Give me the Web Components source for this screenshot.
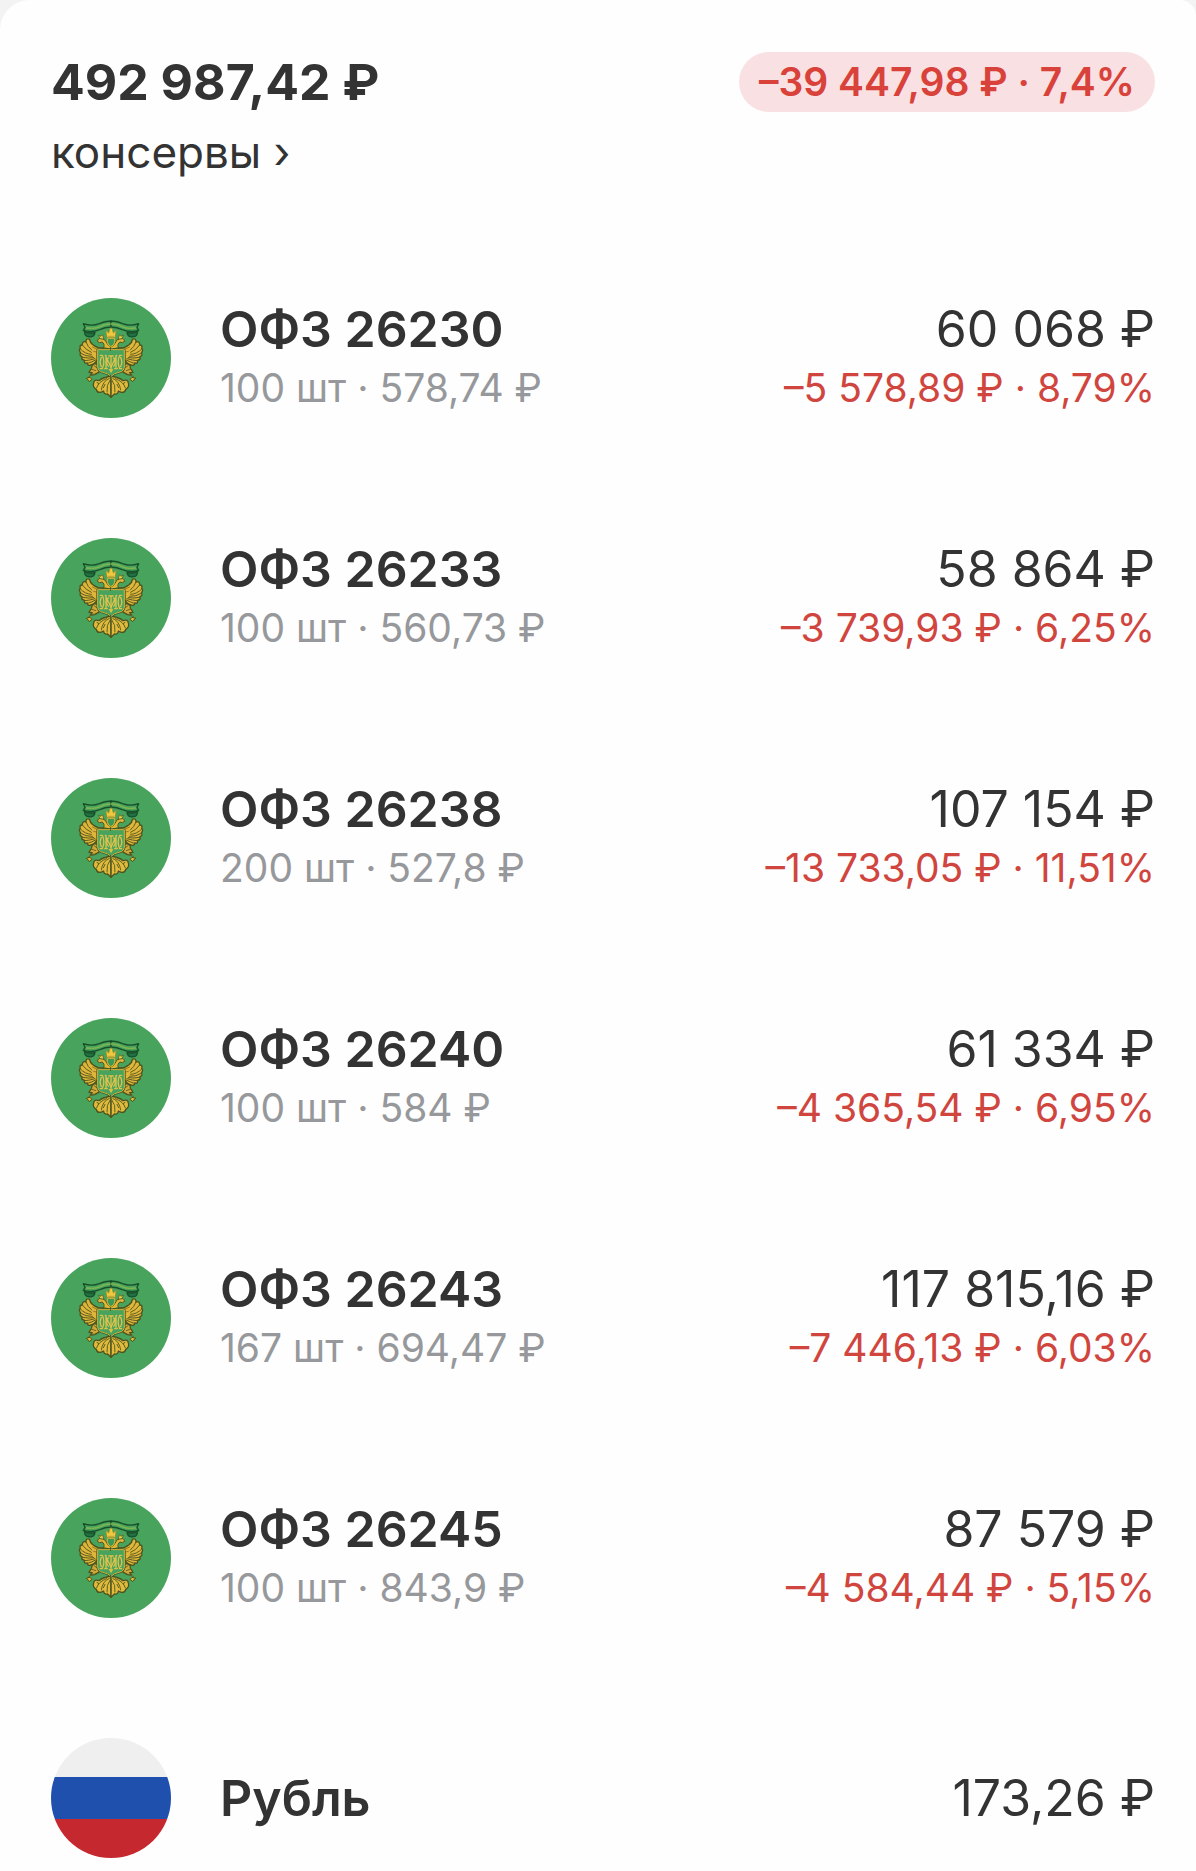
<!DOCTYPE html>
<html lang="ru">
<head>
<meta charset="utf-8">
<meta name="viewport" content="width=device-width, initial-scale=1">
<title>консервы</title>
<style>
	body {
		margin: 0;
		background: #f3f3f4;
		color: #333;
		font-family: Inter, "Liberation Sans", sans-serif;
	}
</style>
</head>
<body>

<portfolio-card>
	<portfolio-header slot="header" name="консервы">
		492 987,42 ₽
		<change-badge slot="change">–39 447,98 ₽ · 7,4%</change-badge>
	</portfolio-header>
	<asset-row name="ОФЗ 26230" details="100 шт · 578,74 ₽" value="60 068 ₽" change="–5 578,89 ₽ · 8,79%"><icon-ofz></icon-ofz></asset-row>
	<asset-row name="ОФЗ 26233" details="100 шт · 560,73 ₽" value="58 864 ₽" change="–3 739,93 ₽ · 6,25%"><icon-ofz></icon-ofz></asset-row>
	<asset-row name="ОФЗ 26238" details="200 шт · 527,8 ₽" value="107 154 ₽" change="–13 733,05 ₽ · 11,51%"><icon-ofz></icon-ofz></asset-row>
	<asset-row name="ОФЗ 26240" details="100 шт · 584 ₽" value="61 334 ₽" change="–4 365,54 ₽ · 6,95%"><icon-ofz></icon-ofz></asset-row>
	<asset-row name="ОФЗ 26243" details="167 шт · 694,47 ₽" value="117 815,16 ₽" change="–7 446,13 ₽ · 6,03%"><icon-ofz></icon-ofz></asset-row>
	<asset-row name="ОФЗ 26245" details="100 шт · 843,9 ₽" value="87 579 ₽" change="–4 584,44 ₽ · 5,15%"><icon-ofz></icon-ofz></asset-row>
	<asset-row name="Рубль" value="173,26 ₽"><icon-rub></icon-rub></asset-row>
</portfolio-card>

<script>
class PortfolioCard extends HTMLElement {

	constructor() {
		super();
		this.attachShadow({ mode: "open" });
	}

	connectedCallback() {
		this.shadowRoot.innerHTML = `
			<style>
				:host {
					display: block;
					box-sizing: border-box;
					padding: 52px 41px 13px 51px;
					background: #fefefe;
					border-radius: 30px 16px 0 0;
				}
				.list {
					display: flex;
					flex-direction: column;
					gap: 120px;
					margin-top: 116px;
				}
			</style>
			<slot name="header"></slot>
			<div class="list" role="list"><slot></slot></div>
		`;
	}
}

class PortfolioHeader extends HTMLElement {

	constructor() {
		super();
		this.attachShadow({ mode: "open" });
	}

	connectedCallback() {
		this.shadowRoot.innerHTML = `
			<style>
				:host {
					display: flex;
					justify-content: space-between;
					align-items: flex-start;
				}
				.info {
					display: flex;
					flex-direction: column;
					align-items: flex-start;
					gap: 10px;
				}
				h1 {
					margin: 0;
					font-size: 50px;
					line-height: 60px;
					font-weight: 700;
				}
				button {
					padding: 0;
					border: 0;
					background: none;
					color: inherit;
					font: inherit;
					font-size: 44px;
					line-height: 60px;
					cursor: pointer;
				}
			</style>
			<div class="info">
				<h1><slot></slot></h1>
				<button type="button">${this.getAttribute("name")} ›</button>
			</div>
			<slot name="change"></slot>
		`;
	}
}

class ChangeBadge extends HTMLElement {

	constructor() {
		super();
		this.attachShadow({ mode: "open" });
	}

	connectedCallback() {
		this.shadowRoot.innerHTML = `
			<style>
				:host {
					display: block;
					padding: 0 20px;
					border-radius: 30px;
					background: #f9e1e3;
					color: #d9423a;
					font-size: 39px;
					line-height: 60px;
					font-weight: 600;
					white-space: nowrap;
				}
			</style>
			<slot></slot>
		`;
	}
}

class AssetRow extends HTMLElement {

	constructor() {
		super();
		this.attachShadow({ mode: "open" });
	}

	connectedCallback() {
		const details = this.getAttribute("details");
		const change = this.getAttribute("change");

		this.setAttribute("role", "listitem");
		this.shadowRoot.innerHTML = `
			<style>
				:host {
					display: flex;
					align-items: center;
					gap: 49px;
					min-height: 120px;
				}
				.column {
					display: flex;
					flex-direction: column;
					white-space: nowrap;
				}
				.value {
					margin-left: auto;
					text-align: right;
				}
				.main {
					font-size: 50px;
					line-height: 60px;
				}
				.name .main {
					font-weight: 600;
				}
				.sub {
					font-size: 39px;
					line-height: 58px;
					color: #96989b;
				}
				.value .sub {
					color: #d0453e;
				}
			</style>
			<slot></slot>
			<div class="column name">
				<span class="main">${this.getAttribute("name")}</span>
				${details ? `<span class="sub">${details}</span>` : ""}
			</div>
			<div class="column value">
				<span class="main">${this.getAttribute("value")}</span>
				${change ? `<span class="sub">${change}</span>` : ""}
			</div>
		`;
	}
}

class IconOfz extends HTMLElement {

	constructor() {
		super();
		this.attachShadow({ mode: "open" });
	}

	connectedCallback() {
		this.shadowRoot.innerHTML = `
			<style>
				:host {
					display: block;
					flex: none;
					width: 120px;
					height: 120px;
				}
				svg {
					display: block;
					width: 100%;
					height: 100%;
				}
			</style>
			<svg viewBox="0 0 360 360" aria-hidden="true">
				<circle cx="180" cy="180" r="180" fill="#48a45c"/>
				<g id="half" stroke-linejoin="round" stroke-linecap="round">
					<!-- ribbon -->
					<path d="M180 69 Q160 69 145 77 Q122 86 97 77 L102 88 L97 98 Q126 104 146 95 Q162 87 180 87Z" fill="#48a45c" stroke="#17502b" stroke-width="4"/>
					<path d="M108 90 Q130 93 147 86 Q162 78 180 78" fill="none" stroke="#86b54e" stroke-width="5" stroke-dasharray="3 5"/>
					<path d="M101 100 q-1 15 11 16 q18 3 20 -12 l-13 1 q-9 0 -18 -5z" fill="#237040" stroke="#17502b" stroke-width="4"/>
					<!-- wing -->
					<path d="M157 150 Q139 151 127 141 Q118 136 116 124 Q104 119 105 132 Q94 128 94 141 Q84 141 88 152 Q82 155 89 165 Q83 171 94 177 Q88 184 101 187 Q97 197 109 195 Q109 205 120 201 Q129 200 139 186 V160 H157Z" fill="#dfb638" stroke="#4d5420" stroke-width="4"/>
					<path d="M105 132 Q110 147 122 156 M94 141 Q104 156 121 163 M89 154 Q102 168 121 169 M89 166 Q104 176 124 175 M95 178 Q111 182 128 179 M102 188 Q116 187 132 182 M110 196 Q123 192 134 186" fill="none" stroke="#5c5c22" stroke-width="3"/>
					<path d="M124 147 Q137 157 154 155 M128 160 L136 162" fill="none" stroke="#9c7c29" stroke-width="3"/>
					<!-- neck and head -->
					<path d="M180 154 L158 149 Q162 137 153 132 Q146 137 139 130 Q142 119 153 121 Q164 124 168 136 Q173 145 180 146Z" fill="#dfb638" stroke="#4d5420" stroke-width="3"/>
					<path d="M146 121 l-3 -10 7 4 5 -5 3 13z" fill="#edc849" stroke="#4d5420" stroke-width="2"/>
					<!-- leg -->
					<path d="M137 197 Q121 197 122 210 L114 223 L124 224 L118 232 L130 230 L143 223 L149 214Z" fill="#d3aa36" stroke="#4d5420" stroke-width="4"/>
					<path d="M121 213 L134 218 M129 203 L143 213 M112 237 L126 229" fill="none" stroke="#6e6426" stroke-width="3"/>
					<path d="M107 240 l10 -2 6 6 -7 6z" fill="#dfb638" stroke="#4d5420" stroke-width="3"/>
					<!-- tail -->
					<path d="M180 234 Q153 239 144 248 Q129 243 128 255 Q124 267 136 274 Q137 284 149 283 L158 279 Q158 290 170 288 L180 298Z" fill="#e3ba3b" stroke="#4d5420" stroke-width="4"/>
					<path d="M175 241 Q154 250 151 276 M167 242 Q142 251 137 269 M178 245 Q165 261 168 282 M138 253 q6 0 5 7 M157 269 l5 -10" fill="none" stroke="#586424" stroke-width="3"/>
					<!-- shield -->
					<path d="M180 155 H140 V207 Q141 220 155 223 Q171 225 180 235" fill="#48a45c" stroke="#30552a" stroke-width="7"/>
					<path d="M180 155 H140 V207 Q141 220 155 223 Q171 225 180 235" fill="#48a45c" stroke="#d9b23a" stroke-width="3"/>
					<!-- monogram -->
					<path d="M148 172 H154 Q163 192 154 212 H148 M151 178 Q144 192 151 206 M165 172 V212 M161 212 H169 M163 172 L180 208 M172 180 Q162 193 172 205" fill="none" stroke="#dfc04a" stroke-width="4"/>
				</g>
				<use href="#half" transform="translate(360 0) scale(-1 1)"/>
				<path d="M180 174 V221 M172 174 H188 M175 213 L180 222 L185 213" fill="none" stroke="#dfc04a" stroke-width="4"/>
				<path d="M180 247 V286" fill="none" stroke="#586424" stroke-width="3"/>
				<!-- breast shield -->
				<path d="M169 121 H191 V133 Q189 142 180 146 Q171 142 169 133Z" fill="#409951" stroke="#dfb638" stroke-width="3"/>
				<!-- crown -->
				<path d="M168 119 L164 97 L173 105 L176 94 L180 89 L184 94 L187 105 L196 97 L192 119Z" fill="#efc83f" stroke="#8b882e" stroke-width="2"/>
				<path d="M171 115 H189" stroke="#a98b2c" stroke-width="2"/>
			</svg>
		`;
	}
}

class IconRub extends HTMLElement {

	constructor() {
		super();
		this.attachShadow({ mode: "open" });
	}

	connectedCallback() {
		this.shadowRoot.innerHTML = `
			<style>
				:host {
					display: flex;
					flex-direction: column;
					flex: none;
					width: 120px;
					height: 120px;
					border-radius: 50%;
					overflow: hidden;
				}
				.white {
					flex: 39;
					background: #efefef;
				}
				.blue {
					flex: 42;
					background: #2050ae;
				}
				.red {
					flex: 39;
					background: #c6282f;
				}
			</style>
			<div class="white"></div>
			<div class="blue"></div>
			<div class="red"></div>
		`;
	}
}

window.customElements.define("portfolio-card", PortfolioCard);
window.customElements.define("portfolio-header", PortfolioHeader);
window.customElements.define("change-badge", ChangeBadge);
window.customElements.define("asset-row", AssetRow);
window.customElements.define("icon-ofz", IconOfz);
window.customElements.define("icon-rub", IconRub);
</script>
</body>
</html>
